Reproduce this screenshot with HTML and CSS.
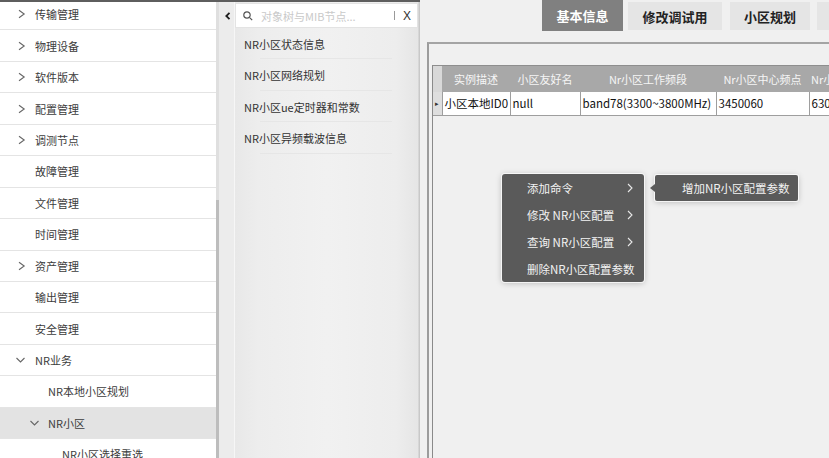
FILE: index.html
```html
<!DOCTYPE html>
<html lang="zh-CN">
<head>
<meta charset="utf-8">
<title>NR小区</title>
<link rel="stylesheet" href="styles.css">
</head>
<body>
<div class="app">
  <div class="left">
    <nav class="sidebar">
      <ul class="tree">
        <li class="row l1"><span class="ico"><svg width="19" height="10" viewBox="0 0 19 10"><polyline points="3,1.2 8.2,5 3,8.8" class="chev"/></svg></span><span>传输管理</span></li>
        <li class="row l1"><span class="ico"><svg width="19" height="10" viewBox="0 0 19 10"><polyline points="3,1.2 8.2,5 3,8.8" class="chev"/></svg></span><span>物理设备</span></li>
        <li class="row l1"><span class="ico"><svg width="19" height="10" viewBox="0 0 19 10"><polyline points="3,1.2 8.2,5 3,8.8" class="chev"/></svg></span><span>软件版本</span></li>
        <li class="row l1"><span class="ico"><svg width="19" height="10" viewBox="0 0 19 10"><polyline points="3,1.2 8.2,5 3,8.8" class="chev"/></svg></span><span>配置管理</span></li>
        <li class="row l1"><span class="ico"><svg width="19" height="10" viewBox="0 0 19 10"><polyline points="3,1.2 8.2,5 3,8.8" class="chev"/></svg></span><span>调测节点</span></li>
        <li class="row l1"><span class="ico"></span><span>故障管理</span></li>
        <li class="row l1"><span class="ico"></span><span>文件管理</span></li>
        <li class="row l1"><span class="ico"></span><span>时间管理</span></li>
        <li class="row l1"><span class="ico"><svg width="19" height="10" viewBox="0 0 19 10"><polyline points="3,1.2 8.2,5 3,8.8" class="chev"/></svg></span><span>资产管理</span></li>
        <li class="row l1"><span class="ico"></span><span>输出管理</span></li>
        <li class="row l1"><span class="ico"></span><span>安全管理</span></li>
        <li class="row l1"><span class="ico"><svg width="19" height="10" viewBox="0 0 19 10"><polyline points="0.5,3 4.5,7 8.5,3" class="chev"/></svg></span><span>NR业务</span></li>
        <li class="row l2"><span class="ico"></span><span>NR本地小区规划</span></li>
        <li class="row l2 sel"><span class="ico"><svg width="19" height="10" viewBox="0 0 19 10"><polyline points="1.5,3 5.5,7 9.5,3" class="chev"/></svg></span><span>NR小区</span></li>
        <li class="row l3"><span class="ico"></span><span>NR小区选择重选</span></li>
      </ul>
    </nav>
    <div class="vscroll"><div class="track"></div><div class="thumb"></div></div>
    <div class="strip"><svg width="6" height="8" viewBox="0 0 6 8"><polyline points="4.5,0.8 1.3,4 4.5,7.2" class="collapse"/></svg></div>
    <aside class="mid">
      <div class="search">
        <svg class="sicon" width="10" height="10" viewBox="0 0 10 10"><circle cx="4" cy="4" r="3.2"/><line x1="6.4" y1="6.4" x2="9.2" y2="9.2"/></svg>
        <span class="ph">对象树与MIB节点...</span>
        <span class="sep"></span>
        <span class="close">X</span>
      </div>
      <ul class="mlist">
        <li class="mrow">NR小区状态信息</li>
        <li class="mrow">NR小区网络规划</li>
        <li class="mrow">NR小区ue定时器和常数</li>
        <li class="mrow">NR小区异频载波信息</li>
      </ul>
    </aside>
  </div>
  <main class="main">
    <div class="tabs">
      <div class="tab active t1">基本信息</div>
      <div class="tab t2">修改调试用</div>
      <div class="tab t3">小区规划</div>
      <div class="tab t4"></div>
    </div>
    <div class="frame">
      <div class="grid">
        <table class="tbl">
          <colgroup>
            <col class="c0"><col class="c1"><col class="c2"><col class="c3"><col class="c4"><col class="c5">
          </colgroup>
          <thead>
            <tr><th class="corner"></th><th>实例描述</th><th>小区友好名</th><th>Nr小区工作频段</th><th>Nr小区中心频点</th><th class="lastcol">Nr小区物理小区ID</th></tr>
          </thead>
          <tbody>
            <tr><td class="rh">&#9656;</td><td>小区本地ID0</td><td>null</td><td>band78(3300~3800MHz)</td><td>3450060</td><td>630</td></tr>
          </tbody>
        </table>
      </div>
    </div>
  </main>
</div>
<ul class="ctx">
  <li><span>添加命令</span><svg width="6" height="10" viewBox="0 0 6 10"><polyline points="1,1 5,5 1,9" class="mchev"/></svg></li>
  <li><span>修改 NR小区配置</span><svg width="6" height="10" viewBox="0 0 6 10"><polyline points="1,1 5,5 1,9" class="mchev"/></svg></li>
  <li><span>查询 NR小区配置</span><svg width="6" height="10" viewBox="0 0 6 10"><polyline points="1,1 5,5 1,9" class="mchev"/></svg></li>
  <li><span>删除NR小区配置参数</span></li>
</ul>
<div class="sub"><span>增加NR小区配置参数</span></div>
</body>
</html>
```

FILE: styles.css
```css
* { box-sizing: border-box; }
html, body { margin: 0; padding: 0; }
body {
  width: 829px;
  height: 458px;
  overflow: hidden;
  position: relative;
  background: #f0f0f0;
  font-family: "Noto Sans CJK SC", "Microsoft YaHei", sans-serif;
  font-size: 11px;
  color: #333;
}
ul { list-style: none; margin: 0; padding: 0; }

.app { display: flex; height: 458px; }

.left {
  display: flex;
  flex: none;
  height: 100%;
  border-top: 2px solid #5e5e5e;
}

.sidebar { width: 216px; background: #fff; overflow: hidden; }
.tree { margin-top: -3px; }
.row {
  height: 31.45px;
  border-bottom: 1px solid #e4e4e4;
  display: flex;
  align-items: center;
  color: #3c3c3c;
  white-space: nowrap;
}
.row.l1 { padding-left: 16px; }
.row.l2 { padding-left: 29px; }
.row.l3 { padding-left: 43px; }
.row.sel { background: #e3e3e3; }
.ico { width: 19px; flex: none; display: flex; align-items: center; }
.chev { fill: none; stroke: #666; stroke-width: 1.1; }

.vscroll { width: 3px; display: flex; flex-direction: column; }
.track { height: 198px; background: #dfdfdf; }
.thumb { flex: 1; background: #bdbdbd; }

.strip { width: 15px; background: #ececec; padding: 5px 0 0 6px; }
.collapse { fill: none; stroke: #1e1e1e; stroke-width: 1.8; }

.mid {
  width: 186px;
  display: flex;
  flex-direction: column;
  background: linear-gradient(to right, #f6f6f6 0, #f6f6f6 1px, #e8e8e8 1px, #ededed 24px, #f1f1f1 50%, #ededed 162px, #e5e5e5 184px, #c8c8c8 185px);
}
.search {
  margin: 1px 2px 0 1px;
  height: 25px;
  background: #fff;
  border: 1px solid #e3e3e3;
  display: flex;
  align-items: center;
  padding-left: 7px;
}
.sicon { flex: none; fill: none; stroke: #555; stroke-width: 1.2; }
.ph { flex: 1; margin-left: 8px; color: #c9c9c9; white-space: nowrap; }
.sep { width: 1px; height: 9px; background: #9a9a9a; margin-right: 8px; }
.close { color: #333; font-size: 12px; font-family: "Liberation Sans", sans-serif; padding-right: 6px; }
.mrow {
  height: 31.45px;
  display: flex;
  align-items: center;
  padding-left: 10px;
  color: #333;
  white-space: nowrap;
  background: linear-gradient(#e6e6e6, #e6e6e6) no-repeat 26px 100% / calc(100% - 54px) 1px;
}

.main {
  flex: 1;
  display: flex;
  flex-direction: column;
  overflow: hidden;
  min-width: 0;
}
.tabs { height: 31px; display: flex; padding-left: 122px; flex: none; }
.tab {
  flex: none;
  display: flex;
  align-items: center;
  justify-content: center;
  font-size: 13px;
  font-weight: bold;
  color: #222;
  background: #e5e5e5;
  margin-top: 2px;
  height: 28px;
}
.tab.active { background: #808080; color: #fff; margin-top: 0; height: 31px; }
.t1 { width: 81px; margin-right: 5px; }
.t2 { width: 94px; margin-right: 8px; }
.t3 { width: 80px; margin-right: 7px; }
.t4 { width: 60px; }

.frame {
  flex: 1;
  margin: 11px 0 0 7px;
  border-top: 2px solid #a4a4a4;
  border-left: 2px solid #9c9c9c;
  padding: 21px 0 0 3px;
  display: flex;
  flex-direction: column;
}
.grid {
  flex: 1;
  border-top: 1px solid #8e8e8e;
  border-left: 1px solid #8a8a8a;
  overflow: hidden;
}
.tbl { border-collapse: collapse; table-layout: fixed; width: 470px; }
.c0 { width: 9px; }
.c1 { width: 68px; }
.c2 { width: 70px; }
.c3 { width: 136px; }
.c4 { width: 93px; }
.c5 { width: 94px; }
.tbl th {
  height: 26px;
  padding: 0;
  background: #a8a8a8;
  color: #f6f6f6;
  font-weight: normal;
  font-size: 11px;
  text-align: center;
  white-space: nowrap;
  overflow: hidden;
}
.tbl th.corner { background: #d8d8d8; }
.tbl th.lastcol { text-align: left; padding-left: 2px; }
.tbl td {
  height: 23px;
  padding: 0 0 0 2px;
  background: #fff;
  color: #111;
  font-size: 11.5px;
  white-space: nowrap;
  overflow: hidden;
  border-right: 1px solid #9e9e9e;
  border-bottom: 1px solid #9e9e9e;
}
.tbl td.rh { background: #dedede; font-size: 7px; padding: 0; text-align: center; color: #333; }

.ctx {
  position: absolute;
  left: 502px;
  top: 174px;
  width: 142px;
  background: #5a5a5a;
  border-radius: 3px;
  box-shadow: 0 0 0 1px rgba(255,255,255,0.75), 0 1px 6px rgba(0,0,0,0.25);
}
.ctx li {
  height: 27px;
  display: flex;
  align-items: center;
  justify-content: space-between;
  padding: 0 11px 0 25px;
  color: #f3f3f3;
  font-size: 11.5px;
  white-space: nowrap;
}
.mchev { fill: none; stroke: #e8e8e8; stroke-width: 1.1; }

.sub {
  position: absolute;
  left: 655px;
  top: 175px;
  width: 143px;
  height: 26px;
  background: #5a5a5a;
  border-radius: 2px;
  box-shadow: 0 0 0 1px rgba(255,255,255,0.8), 0 1px 6px rgba(0,0,0,0.25);
  display: flex;
  align-items: center;
  padding-left: 27px;
  color: #f3f3f3;
  font-size: 11.5px;
  white-space: nowrap;
}
.sub::before {
  content: "";
  position: absolute;
  left: -5px;
  top: 9px;
  border-top: 4px solid transparent;
  border-bottom: 4px solid transparent;
  border-right: 5px solid #5a5a5a;
}
```
